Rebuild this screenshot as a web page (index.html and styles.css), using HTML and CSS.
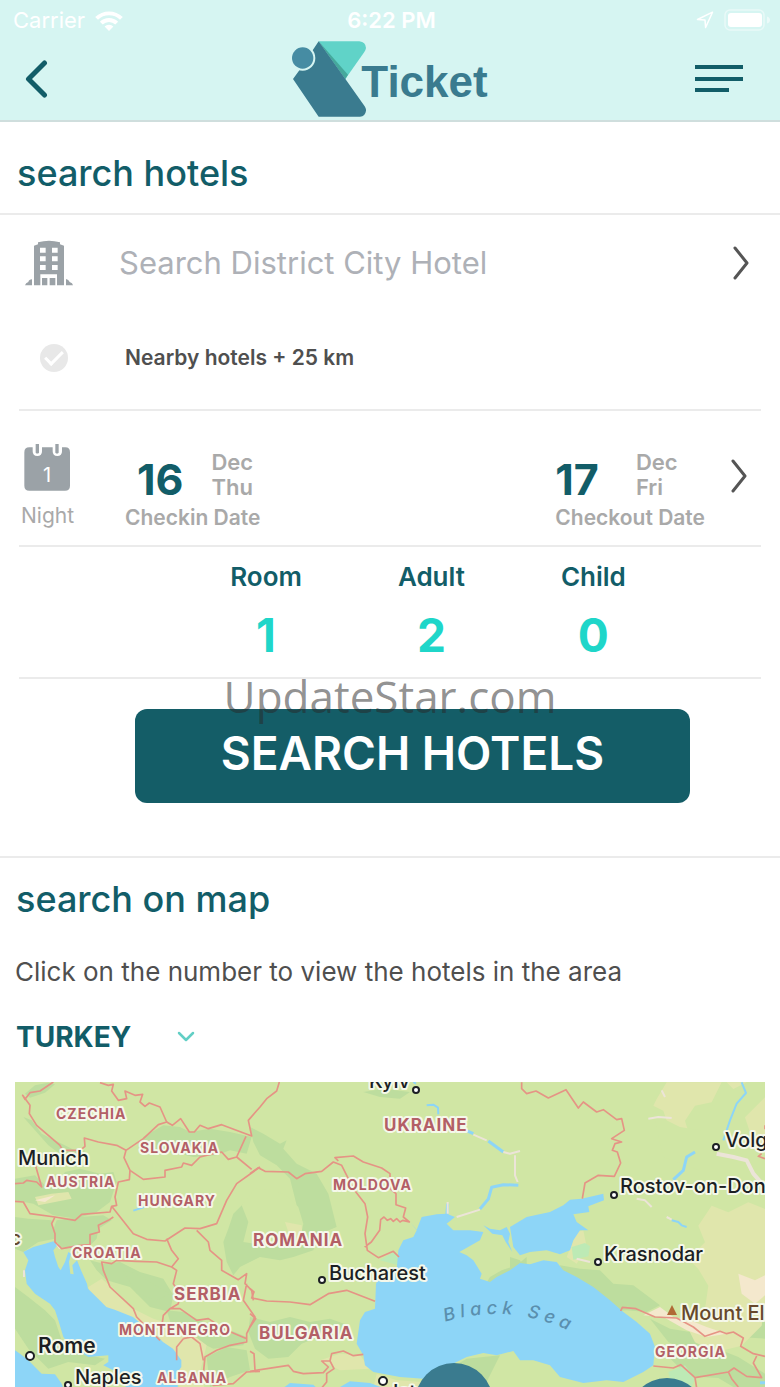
FILE: index.html
```html
<!DOCTYPE html>
<html lang="en">
<head>
  <meta charset="UTF-8">
  <meta name="viewport" content="width=device-width, initial-scale=1.0">
  <title>Ticket - Search Hotels</title>
  <link rel="stylesheet" href="styles.css">
</head>
<body>
  <header class="top">
    <div class="status-bar">
      <div class="carrier">
        <span>Carrier</span>
        <svg width="28" height="21" viewBox="0 0 28 21" fill="#fff">
          <path d="M14 21l-4.4-4.4a6.4 6.4 0 0 1 8.8 0z"/>
          <path d="M7.700 14.600l-2.800-2.800a13 13 0 0 1 18.200 0l-2.800 2.800a9 9 0 0 0-12.600 0z"/>
          <path d="M3 9.700L.2 7a20 20 0 0 1 27.600 0L25 9.700a16 16 0 0 0-22 0z"/>
        </svg>
      </div>
      <div class="clock">6:22 PM</div>
      <div class="indicators">
        <svg width="18" height="18" viewBox="0 0 18 18" fill="none" stroke="#fff" stroke-width="1.500" stroke-linejoin="round">
          <path d="M1.500 8.500L16.500 1.200L9.600 16.500L9 9z"/>
        </svg>
        <svg width="46" height="22" viewBox="0 0 46 22">
          <rect x="1" y="1" width="39" height="20" rx="5" fill="none" stroke="#fff" stroke-opacity=".45" stroke-width="1.500"/>
          <rect x="4" y="4" width="34" height="14" rx="3" fill="#fff"/>
          <path d="M43 7.500q3 1 3 3.500t-3 3.500z" fill="#fff" fill-opacity=".5"/>
        </svg>
      </div>
    </div>
    <nav class="nav">
      <button class="icon-btn" type="button" aria-label="Back">
        <svg width="24" height="38" viewBox="0 0 24 38" fill="none" stroke="#125d68" stroke-width="5" stroke-linecap="round" stroke-linejoin="round">
          <path d="M20.500 3L4.500 19l16 16"/>
        </svg>
      </button>
      <a class="logo" href="#">
        <svg width="74" height="76" viewBox="876 124 222 228">
          <path d="M956 125h122q19 2 20 20q-1 6-5 12l-57 81z" fill="#60d3c8"/>
          <path d="M956 125l88 100l-8 13z" fill="#45a99c"/>
          <path d="M956 125l138 195q5 8 4 13q-2 16-18 18H956L879 238l18-25z" fill="#3a7b8f"/>
          <circle cx="908" cy="175" r="38" fill="#d6f5f2"/>
          <circle cx="908" cy="175" r="32" fill="#468ca3"/>
        </svg>
        <span>Ticket</span>
      </a>
      <button class="icon-btn" type="button" aria-label="Menu">
        <svg width="48" height="28" viewBox="0 0 48 28" fill="#125d68">
          <rect y="0" width="48" height="4"/>
          <rect y="12" width="48" height="4"/>
          <rect y="23" width="34" height="4"/>
        </svg>
      </button>
    </nav>
  </header>

  <main>
    <form class="search" onsubmit="return false">
      <h1 class="title">search hotels</h1>

      <div class="panel place">
        <div class="row">
          <label class="lead" for="place" aria-label="Place">
            <svg width="48" height="46" viewBox="76 326 144 138" fill="#9ba2a7">
              <path fill-rule="evenodd" d="M103 343l12-4v-6q33-9 66 0v6l12 4v119h-21v-33h-50v33h-19zM121 349v15h17v-15zM157 349v15h17v-15zM121 375v15h17v-15zM157 375v15h17v-15zM121 401v15h17v-15zM157 401v15h17v-15z"/>
              <path d="M127 440h16v22h-16zM150 440h17v22h-17zM76 462q2-7 10-10q2-8 11-8v18zM199 443q8 1 11 9q9 3 10 10h-21z"/>
            </svg>
          </label>
          <input class="place-input" id="place" type="text" placeholder="Search District City Hotel">
          <svg class="chevron" width="16" height="34" viewBox="0 0 16 34"><path d="M2 2l12 15L2 32"/></svg>
        </div>
        <div class="row nearby">
          <span class="lead"><input class="check" id="nearby" type="checkbox"></span>
          <label for="nearby">Nearby hotels + 25 km</label>
        </div>
      </div>

      <button class="panel row dates" type="button">
        <span class="lead nights">
          <svg width="48" height="50" viewBox="72 130 144 150">
            <path fill="#9ba2a7" d="M88 143h10v12q0 14 14 14t14-14v-12h32v12q0 14 14 14t14-14v-12h10q14 0 14 15v100q0 15-15 15H88q-15 0-15-15V158q0-15 15-15zM107 133h10v26q-5 5-10 0zM166 133h10v26q-5 5-10 0z"/>
            <text x="141" y="246" class="night-count">1</text>
          </svg>
          <span>Night</span>
        </span>
        <span class="date">
          <span class="day-line">
            <span class="day">16</span>
            <span class="month">Dec<br>Thu</span>
          </span>
          <span class="caption">Checkin Date</span>
        </span>
        <span class="date checkout">
          <span class="day-line">
            <span class="day">17</span>
            <span class="month">Dec<br>Fri</span>
          </span>
          <span class="caption">Checkout Date</span>
        </span>
        <svg class="chevron" width="16" height="34" viewBox="0 0 16 34"><path d="M2 2l12 15L2 32"/></svg>
      </button>

      <div class="panel guests">
        <button class="guest" type="button"><span>Room</span><strong>1</strong></button>
        <button class="guest" type="button"><span>Adult</span><strong>2</strong></button>
        <button class="guest" type="button"><span>Child</span><strong>0</strong></button>
      </div>

      <div class="submit">
        <button class="submit-btn" type="submit">SEARCH HOTELS</button>
        <div class="watermark">UpdateStar.com</div>
      </div>
    </form>

    <section class="map-section">
      <h2 class="title">search on map</h2>
      <p class="hint">Click on the number to view the hotels in the area</p>
      <div class="country">
        <select class="country-select" aria-label="Country">
          <option>TURKEY</option>
        </select>
        <svg width="18" height="12" viewBox="0 0 18 12" fill="none" stroke="#62cfc5" stroke-width="2.500" stroke-linecap="round" stroke-linejoin="round">
          <path d="M2 2l7 7l7-7"/>
        </svg>
      </div>

      <svg class="map" viewBox="0 0 750 306">
        <rect width="750" height="306" fill="#d0e6a4"/>
        <g transform="scale(.33333) translate(-45 -35)">
          <!-- forests and mountains -->
          <g fill="#bddd9e">
            <path d="M75 70l30-25 40-8 20 5-30 25-45 15zM70 140l25 10 30 40 60 30 50 25 20-5-10 20-60-5-40-30zM45 325l60-10 30 30 40-10 20-30 45-10 60 15 40-5 10 30-20 60-40 30-60 20-70-10-60-35-55-10zM45 440l40 5 70 5 10 55-50 10-45 30-25-10z"/>
            <path d="M170 450l70-10 70-5 25 15-40 25-5 30-30 30-85-5-20-40zM430 200l60-35 50 5 30 15 60-10 60 10 65 15-15 50-50-10-40 15-70 5-60-15-60 10-30-30z"/>
            <path d="M750 170l40 20 50 30 20-10-10 25 40 45 60 30 35 60 25 100-50 20-20 50-60 20-40 10-60-10-60 30-20 25-20-40-10-60 15-40 15-45 30-30 40 20 50-15 50 30 20-30-20-80-40-40-50-30-20-40z"/>
            <path d="M270 570l40 10 50-5 60 30 70 20 30 50-10 50-60-15-60-60-70-20-30-30zM500 720l50 5 60 30 70 20 60 25-10 25-90 10-60-30-60-20zM750 740l60 15 60-15 60 15 60-10 55 20-30 30-60 5-50 20-40 40-60 5-40-30-20-50zM620 860l60-30 60 10 10 60-60 20-60 30z"/>
            <path d="M45 650l40 30 50 40 30 30 20 60 60 40 70 15-30 20-80-10-60 20-60-60-40-60zM1340 900l60-35 100-10-30 60-20 38h-70zM1090 65l60-10 80 10-30 20-60-5zM1440 670l30-50 35-20 45-15 30-25v30l-60 30-30 25z"/>
            <path d="M1680 585l60 10 60 5 40 40 60 5 80 60-40 20-60-5-60 5-50-30-80-70zM1950 745l60 30 60 10 40-25 80 20 50-30 55-5v60l-80-5-30 30-60-5-60 20-60-30zM1975 830l60 10 80-20 100 40 80 50v43h-90l-50-30-90-5zM1530 560l30 10 10 20-40 10zM520 800l40 10-10 50 20 60-20 20-20-60zM370 600l40 10 100 60-40 20-60-20z"/>
          </g>
          <!-- lowland inside the Carpathians -->
          <path fill="#d0e6a4" d="M765 355l60 5 40 20 30 30 15 50-10 50-60 20-50-5-60-10 15-60-20-50z"/>
          <!-- dry land -->
          <g fill="#e0e6ac">
            <path d="M2000 36l-30 50-10 20 30 15 10 30 30 20 30 50 10-20-15-50 30-45 50-10 30-60h15l20 20 40-20h55v45l-60 60 20 60 40 20v195l-50-20-60 30-50-20-40 60 20 50-50 50 30 30 30 50-10 70-60 40 30 60 60 30 80-20 60-60 10-70V36z"/>
            <path d="M265 650l40-25 35 30 60 60 60 30 60 20 60 30 40 30-20 80 15 53h-75l-20-110-110-75-90-30-50-70zM105 380l50-10 50-5 10 20-50 10-50 10zM960 870l60-20 60 5 30 40-90 5zM1700 560l30-75 20-5 10 50-30 50zM855 455l50 10 5 60-30 5z"/>
            <path d="M1130 910l60 20 80 5 20 18h-170z"/>
          </g>
          <path fill="#d0e6a4" d="M1960 130l80 40 60 10 60 60-60 60-110-40z"/>
          <path fill="#f4e8cd" d="M1930 735l50-25 40 30 50 10 50 20 60 20-60 10-60-20-70-40zM2215 610l50 20 30-15v60l-30 25-40-30zM105 390l60-15-30 20z"/>
          <path fill="#bdeab5" d="M1715 530l40-12 15 10-5 30-45 10zM1140 570l40-25 17 10-2 30zM2005 905l50-20 30 40-10 25h-60z"/>

          <!-- seas -->
          <g fill="#8dd5f7">
            <path d="M70 545l30-15 30-8 30-9 12 12-12 15 5 20 10 30 7 10 13-25 10-30 8 5-6 25 4 35 10 2-4-27 14-15 12 30 18 40 3 15 35 35 20 20 25 8 55 22 30 25 30 20 30 30 30 20 25 35v20l-15 20 5 43H380l-30-48-40-20 15-10v-20l-60 5-50-30-25-30-15-50-10-30-15-20-45-30-25-30-5-40 10-30z"/>
            <path d="M45 840l15 10 25 20 40 40 40 2 20 28 5 13H45z"/>
            <path d="M1230 455L1250 478 1265 440 1310 432 1340 430 1365 440 1340 460 1360 480 1410 480 1450 485 1440 510 1378 545 1400 555 1420 570 1445 610 1440 625 1470 635 1490 620 1530 600 1560 578 1590 582 1630 570 1670 575 1690 600 1730 620 1780 650 1830 690 1870 725 1910 755 1950 790 1965 830 1960 885 1930 905 1870 935 1820 930 1750 938 1680 920 1650 885 1600 870 1560 870 1540 842 1490 855 1450 848 1400 860 1350 885 1290 915 1270 925 1200 920 1120 905 1095 885 1090 855 1070 820 1080 750 1095 725 1125 715 1128 640 1145 610 1190 600 1195 540 1210 510 1240 500 1250 480z"/>
            <path d="M1530 470l50-30 70-15 40-20 20-17 35-3 65-15 2 20-47 18 3 17-48 7 10 23 35 25-25 0-20 30-10 30-30 12-40-12-50 5-30 10-20-25z"/>
            <path d="M1450 465l20 10 30 5 20-10 10 20-5 25 12 30-20-30-10-20-30-5zM850 953l20-15 70 5 10 10zM1015 953l35-20 60 5 40 15z"/>
          </g>
          <g fill="none" stroke="#8dd5f7" stroke-width="6" stroke-linejoin="round">
            <path d="M1280 105l20-2 14 9 1 20M1240 35l8 5M400 421l30-10 15-8M2015 450l20 5 10 10 15 5M2225 36l13 32-28 32-20 50-20 60"/>
            <path d="M1370 168l50 22M1465 212l45 33M1555 345l-45-2-35 8-10 35-25 30M1340 440l3-40M2085 245l-25 15-10 40-30 28M2280 937h15" stroke-width="9"/>
          </g>
          <g fill="none" stroke="#ece4d8" stroke-width="6" stroke-linejoin="round">
            <path d="M1420 193l40 17M1510 245l20 5 30-8M1545 255v60l8 20M1370 440l70-22M1343 395v35M1945 145l30-5 40 3M1985 60l10 20M1910 385l25 5 20 20M2000 440l15 8M1730 565l40 10M170 520l10 15M72 600v20"/>
            <path d="M2150 250l50 10 40 10 20 40 35 40" stroke-width="12"/>
          </g>

          <!-- country borders -->
          <g fill="none" stroke="#e59485" stroke-width="5" stroke-linejoin="round">
            <path d="M160 35l-40 27-30 5-15 20-7-12 22 30-2 25 22 35 70 60 8 15h52l15-12-2-25 42 12 55 10 28 15"/>
            <path d="M300 37l25 8 15-3-5 20 20 28 25-5-5-23 30 13 23-3-8 23 15 13 13-10 32 12 20 45-25 8-45 42-52 35-6 22 18 38-2 28-33 7-10 45 5 25-15 3-5 17-85 7-20 18-60-10-75-10-20-35-25-2"/>
            <path d="M500 155l17 10 25-20 26 40h15l17-20 25 10 40-12 90 34-10-47 35-40 20-25 30-23 8-27M738 198l-28 62 45 37M390 300l40 27 65-7v-20l50-10 5-12 25 7 25-25 40-10 25-5 20 22 25-7"/>
            <path d="M780 290l-70 50-30 50-30 70-50 15-45-2-60 39-55-5-40-17-65-82M165 440l-10 20 10 30v25l20 20 55-10 30-2v-30l28-8-3-20 30-15 15-10M105 280l20 70-15-15-30-5-10 8-25 2"/>
            <path d="M500 505l15 35 20 25-20 25-45-15-60-2-60-3-15 10-30-5 5 25 20 50 70 65 10 25 70 70M590 480l35 35 5 25 35 30v30l50 28 25-18-5 30 20 20 5 30M515 590l15 10-10 40 20 30-5 30-25 15-20 20-5 35M510 715l30 0 50 35 35-5 55 35 60 25M740 640l-10 50 35 50-25 50v25l-50 10-40 15-35 20-5 50 30 35 60-5 40-35 40-2M550 805l25-5 25 20 10 50M530 870v-40l20-25"/>
            <path d="M750 310l25-18 20 11 70 2 25 20 25-15 50-7 35-28 25 10 15 30 20 40 35 45 8 40-8 50 7 50 33 22 45-19 17 17M1015 272l-10-10 55-5 30 18 55 18 25 17v45l18 15v33l29 10-7 27 18 15-20-5-8 5-10-10-10 8-8-8-10 5-10-10-10 8-3 32-25 35-20 15"/>
            <path d="M750 655l12 10-7 18 45 9 70 3 60 8 55-33 55-10 85 33M750 730l17 15-17 25M750 843l12 7 3 50M750 903l115-18 15 18 30 7 60-3 15-17-20-18h25l5-22 35-8 30 14 30-4M990 872l12 23-22 15v25l-15 18"/>
            <path d="M1565 36v19l15 15 28-8 37 21 53-25 37 55 15-18 40 30 20-7 40 30 15-3 8 35-38 25 30 10-20 5-8 20 15 5 10 33-19 40-48-3-40 23-8 47"/>
            <path d="M1862 722l5-11 41 4 57 25 65 3 50 27 35 28 45-15 20 7 20-5 30 18-8 25 38 22 35 8M1960 887l60 6 22-10 43 39 5 31M2085 922l100-17 17-12 38 25 45 4-25-44 10-21M2185 905l10 20 20 25M2295 165v12M2295 265l-20-7 10-8"/>
          </g>
        </g>

        <g class="marker">
          <circle cx="401" cy="8" r="3"/>
          <circle cx="307" cy="198" r="3"/>
          <circle cx="701" cy="65" r="3"/>
          <circle cx="599" cy="113" r="3"/>
          <circle cx="583" cy="180" r="3"/>
          <circle cx="15" cy="274" r="4"/>
          <circle cx="53" cy="303" r="3"/>
          <circle cx="368" cy="299" r="4"/>
        </g>
        <path d="M657 223l5 10h-10z" fill="#b06a35"/>

        <g class="land">
          <text x="41" y="37">CZECHIA</text>
          <text x="125" y="71">SLOVAKIA</text>
          <text x="31" y="105">AUSTRIA</text>
          <text x="123" y="124">HUNGARY</text>
          <text x="57" y="176">CROATIA</text>
          <text x="104" y="253">MONTENEGRO</text>
          <text x="142" y="301">ALBANIA</text>
          <text x="318" y="108">MOLDOVA</text>
          <text x="640" y="275">GEORGIA</text>
        </g>
        <g class="land big">
          <text x="159" y="218">SERBIA</text>
          <text x="369" y="49">UKRAINE</text>
          <text x="238" y="164">ROMANIA</text>
          <text x="244" y="257">BULGARIA</text>
        </g>
        <g class="city">
          <text x="3" y="83">Munich</text>
          <text x="60" y="302">Naples</text>
          <text x="354" y="6">Kyiv</text>
          <text x="314" y="198">Bucharest</text>
          <text x="710" y="65">Volgograd</text>
          <text x="605" y="111">Rostov-on-Don</text>
          <text x="589" y="179">Krasnodar</text>
          <text x="378" y="317">Istanbul</text>
          <text x="23" y="271" class="capital">Rome</text>
          <text x="666" y="238" class="peak">Mount Elbrus</text>
          <text x="6" y="163" class="peak" text-anchor="end">Mont Blanc</text>
        </g>
        <path id="sea" d="M430 240Q500 218 568 256" fill="none"/>
        <text class="sea"><textPath href="#sea">Black Sea</textPath></text>

        <!-- hotel clusters -->
        <circle cx="439" cy="320" r="39" fill="#3a7b8f"/>
        <circle cx="652" cy="335" r="39" fill="#3a7b8f"/>
      </svg>
    </section>
  </main>
</body>
</html>
```
FILE: styles.css
```css
*, *::after {
  box-sizing: border-box;
}
body {
  margin: 0;
  font-family: Inter, "Liberation Sans", sans-serif;
  background-color: #fff;
  color: #4f4f4f;
  overflow-x: hidden;
}
button {
  padding: 0;
  border: none;
  background: none;
  font-family: inherit;
  color: inherit;
  text-align: left;
  cursor: pointer;
}
svg {
  display: block;
  flex: none;
}

/* header */
.top {
  background-color: #d6f5f2;
  border-bottom: 2px solid #cfdedd;
}
.status-bar {
  display: grid;
  grid-template-columns: 1fr auto 1fr;
  align-items: center;
  height: 40px;
  padding: 0 10px 0 13px;
  color: #fff;
  font-size: 22px;
}
.carrier, .indicators {
  display: flex;
  align-items: center;
  gap: 10px;
}
.indicators {
  justify-content: flex-end;
}
.clock {
  font-weight: 600;
}
.nav {
  display: grid;
  grid-template-columns: 1fr auto 1fr;
  align-items: center;
  height: 80px;
  padding: 0 37px 2px 24px;
}
.nav .icon-btn:last-child {
  justify-self: end;
}
.logo {
  display: flex;
  align-items: center;
  margin-left: 13px;
  color: #3a7b8f;
  font-family: "Liberation Sans", Arial, sans-serif;
  font-size: 44px;
  font-weight: bold;
  text-decoration: none;
}
.logo span {
  margin-left: -5px;
  padding-top: 5px;
}

/* search form */
.title {
  margin: 0;
  padding: 0 16px;
  color: #125d68;
  font-size: 36px;
  font-weight: 500;
  line-height: 44px;
}
.search {
  border-bottom: 2px solid #ebebeb;
}
.search .title {
  padding: 29px 17px 18px;
  border-bottom: 2px solid #ebebeb;
}
.panel {
  margin: 0 19px;
  border-bottom: 2px solid #ebebeb;
}
.row {
  display: flex;
  align-items: center;
}
.lead {
  flex: none;
  width: 100px;
  padding-left: 6px;
}
.chevron {
  fill: none;
  stroke: #555;
  stroke-width: 3px;
  stroke-linecap: round;
  stroke-linejoin: round;
}
.place {
  height: 196px;
  padding-right: 12px;
}
.place .row {
  height: 95px;
}
.place-input {
  flex: 1;
  min-width: 0;
  padding: 0;
  border: none;
  outline: none;
  background: none;
  font-family: inherit;
  font-size: 31px;
}
.place-input::placeholder {
  color: #aeb1b7;
  opacity: 1;
}
.nearby {
  font-size: 21px;
  font-weight: 600;
}
.place .nearby .lead {
  width: 106px;
  padding-left: 21px;
}
.check {
  display: block;
  position: relative;
  width: 28px;
  height: 28px;
  margin: 0;
  border-radius: 50%;
  background-color: #e8e8e8;
  appearance: none;
}
.check::after {
  content: "";
  position: absolute;
  left: 9px;
  top: 3px;
  width: 10px;
  height: 18px;
  border: solid #fff;
  border-width: 0 3px 3px 0;
  transform: rotate(45deg);
}
.dates {
  width: calc(100% - 38px);
  height: 136px;
  padding: 16px 14px 0 0;
  color: #a9a9a9;
}
.dates .lead {
  width: 106px;
  padding-left: 2px;
}
.nights {
  display: flex;
  flex-direction: column;
  gap: 9px;
  font-size: 21px;
  line-height: 28px;
}
.nights svg {
  margin-left: 3px;
}
.night-count {
  fill: #fff;
  font-size: 60px;
  text-anchor: middle;
}
.date {
  display: flex;
  flex: 1;
  flex-direction: column;
  padding-top: 7px;
  font-weight: 600;
}
.checkout {
  flex: none;
}
.day-line {
  display: flex;
  align-items: center;
  gap: 28px;
  padding-left: 12px;
}
.checkout .day-line {
  gap: 37px;
  padding-left: 0;
}
.day {
  padding-top: 8px;
  color: #125d68;
  font-size: 43px;
  font-weight: 700;
  line-height: 48px;
}
.month {
  font-size: 22px;
  line-height: 25px;
}
.caption {
  font-size: 21px;
  line-height: 30px;
}
.dates .chevron {
  margin: 0 0 20px 26px;
}
.guests {
  display: flex;
  justify-content: center;
  gap: 96px;
  height: 132px;
  padding: 14px 0 0 76px;
}
.guest {
  display: flex;
  flex-direction: column;
  align-items: center;
  gap: 14px;
  color: #125d68;
  font-size: 26px;
  font-weight: 600;
  line-height: 32px;
}
.guest strong {
  color: #1fd6c9;
  font-size: 46px;
  font-weight: 700;
  line-height: 56px;
}
.submit {
  position: relative;
  padding: 30px 90px 53px 135px;
}
.submit-btn {
  display: block;
  width: 100%;
  height: 94px;
  padding-bottom: 6px;
  border-radius: 12px;
  background-color: #145d67;
  color: #fff;
  font-size: 46px;
  font-weight: 600;
  text-align: center;
}
.watermark {
  position: absolute;
  top: -13px;
  left: 0;
  right: 0;
  color: rgba(40, 40, 40, 0.52);
  font-family: "Open Sans", "Noto Sans", sans-serif;
  font-size: 44px;
  font-weight: 400;
  line-height: 60px;
  text-align: center;
  pointer-events: none;
}

/* map */
.map-section {
  padding: 19px 15px 0;
}
.map-section .title {
  padding: 0 1px;
}
.hint {
  margin: 35px 0 29px;
  font-size: 26px;
  line-height: 32px;
}
.country {
  display: flex;
  align-items: center;
  gap: 20px;
  margin-bottom: 25px;
}
.country-select {
  width: 142px;
  height: 40px;
  padding: 0 0 0 1px;
  border: none;
  background: none;
  color: #125d68;
  font-family: inherit;
  font-size: 28px;
  font-weight: 700;
  appearance: none;
}
.map {
  width: 100%;
}
.map text {
  paint-order: stroke;
  stroke: #f5f8ea;
  stroke-width: 4px;
  stroke-linejoin: round;
}
.land {
  fill: #b35f66;
  font-size: 14px;
  font-weight: 700;
  letter-spacing: 1px;
}
.land.big {
  font-size: 17px;
}
.city {
  fill: #1c1f24;
  font-size: 20px;
  font-weight: 500;
}
.capital {
  font-size: 21px;
  font-weight: 600;
}
.peak {
  fill: #67482b;
}
.map .sea {
  fill: #5a8fae;
  stroke: none;
  font-size: 18px;
  font-style: italic;
  font-weight: 500;
  letter-spacing: 5px;
}
.marker {
  fill: #fff;
  stroke: #1c1f24;
  stroke-width: 2px;
}
.map .night-count, .nights text {
  stroke: none;
}
```
